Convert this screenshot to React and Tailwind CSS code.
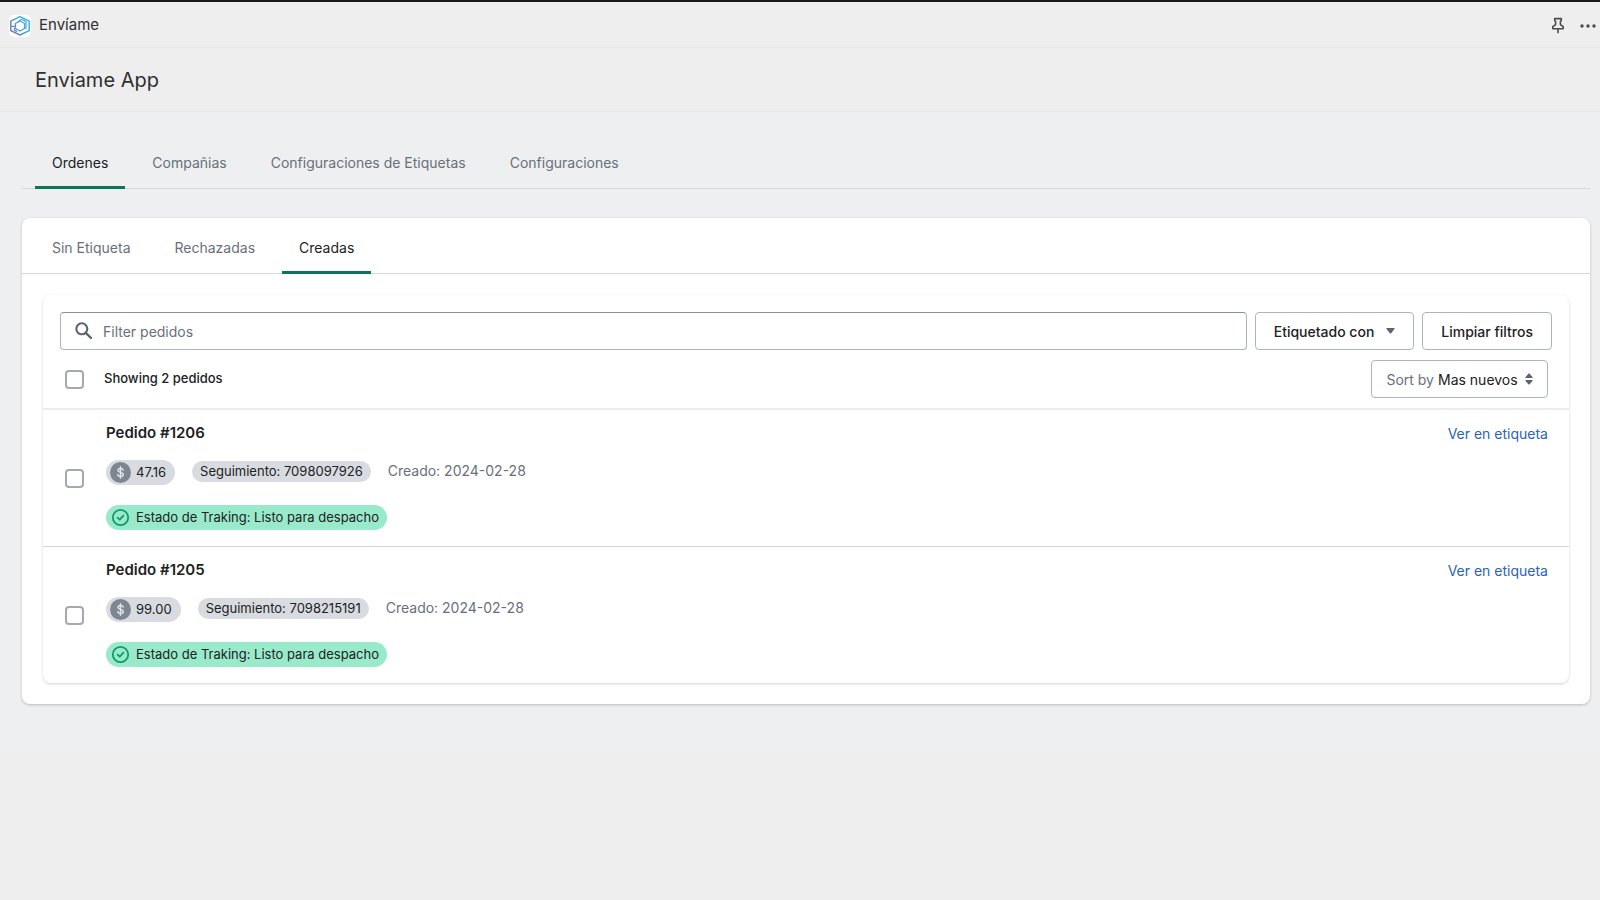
const mainTabs = ["Ordenes", "Compañias", "Configuraciones de Etiquetas", "Configuraciones"];
const orderTabs = ["Sin Etiqueta", "Rechazadas", "Creadas"];
const orders = [
  { id: "1206", total: "47.16", tracking: "7098097926", created: "2024-02-28", status: "Listo para despacho" },
  { id: "1205", total: "99.00", tracking: "7098215191", created: "2024-02-28", status: "Listo para despacho" },
];

function Logo() {
  return (
    <svg viewBox="0 0 22 22" className="size-[22px]" fill="none" aria-hidden="true">
      <defs>
        <linearGradient id="logo" x1="2" y1="18" x2="18" y2="6" gradientUnits="userSpaceOnUse">
          <stop stopColor="#7b6db8" />
          <stop offset="0.45" stopColor="#4e9bd0" />
          <stop offset="1" stopColor="#35b3e6" />
        </linearGradient>
      </defs>
      <rect width="22" height="22" rx="5" fill="#fff" />
      <g stroke="url(#logo)" strokeWidth="1.5" strokeLinejoin="round">
        <path d="M11 1.7 20.2 6.2V15.6L11 20 1.800 15.600V6.200Z" />
        <path d="M11 6 15.600 8.500V13.500L11 16 6.400 13.500V8.500Z" strokeWidth="1.4" />
        <path d="M8.600 7.200 11.600 4.800Q12.600 4.200 13.700 4.800L17 6.600V14M2 11.400H6.200M5.400 13V15.200L8 16.600" strokeWidth="1.200" />
      </g>
    </svg>
  );
}

function PinIcon() {
  return (
    <svg viewBox="0 0 14 18" className="h-[18px] w-[14px]" fill="none" stroke="#4a4a4a" strokeWidth="1.600" strokeLinejoin="round" strokeLinecap="round" aria-hidden="true">
      <path d="M3.700 1.600H10.300V3.500L9.400 4.500V7.600L12.200 9.700V11.800H1.800V9.700L4.600 7.600V4.500L3.700 3.500Z" />
      <path d="M7 12V15.600" />
    </svg>
  );
}

function DotsIcon() {
  return (
    <svg viewBox="0 0 16 4" className="h-1 w-4" fill="#4a4a4a" aria-hidden="true">
      <circle cx="2" cy="2" r="1.7" />
      <circle cx="8" cy="2" r="1.7" />
      <circle cx="14" cy="2" r="1.7" />
    </svg>
  );
}

function SearchIcon() {
  return (
    <svg viewBox="0 0 18 18" className="size-[18px] shrink-0" fill="none" stroke="#5b6470" strokeWidth="2.100" aria-hidden="true">
      <circle cx="6.800" cy="6.800" r="5.500" />
      <path d="M10.800 10.800 16 16" strokeWidth="2.400" strokeLinecap="round" />
    </svg>
  );
}

function Tabs({ items, active, label, className }) {
  return (
    <div role="tablist" aria-label={label} className={`flex gap-[10px] border-b border-[#d5d7da] px-[13px] ${className}`}>
      {items.map((item) => (
        <button
          key={item}
          type="button"
          role="tab"
          aria-selected={item === active}
          className={
            item === active
              ? "-mb-px rounded-t-xs border-b-3 border-[#0b7557] px-[17px] pt-[5px] text-[#202223]"
              : "-mb-px border-b-3 border-transparent px-[17px] pt-[5px] text-[#697079]"
          }
        >
          {item}
        </button>
      ))}
    </div>
  );
}

function Checkbox({ label }) {
  return (
    <input
      type="checkbox"
      aria-label={label}
      className="size-[19px] shrink-0 appearance-none rounded-[4px] border-2 border-[#a3a8b2] bg-white checked:bg-[#0b7557]"
    />
  );
}

function OrderRow({ order }) {
  return (
    <li className="flex items-start border-t border-[#d3d7dd] pr-[21px] pl-[22px] first:border-t-0">
      <div className="flex h-[136px] items-center">
        <Checkbox label={`Seleccionar pedido ${order.id}`} />
      </div>
      <div className="ml-[22px] flex min-w-0 flex-1 flex-col items-start pt-[13px]">
        <h3 className="text-[15px] leading-5 font-semibold">Pedido #{order.id}</h3>
        <div className="mt-[17px] flex items-start">
          <span className="flex h-[25px] items-center gap-[5px] rounded-full bg-[#d8dbe0] pr-[9px] pl-1 text-[13px]">
            <svg viewBox="0 0 21 21" className="size-[21px]" fill="none" aria-hidden="true">
              <circle cx="10.5" cy="10.5" r="10.5" fill="#7f8692" />
              <path d="M13.200 8.100C13 7 12 6.500 10.600 6.500 9.100 6.500 8 7.200 8 8.400 8 11 13.300 9.700 13.300 12.500 13.300 13.700 12.100 14.500 10.600 14.500 9 14.500 7.900 13.900 7.700 12.700M10.500 4.800V16.200" stroke="#dfe2e6" strokeWidth="1.5" strokeLinecap="round" />
            </svg>
            {order.total}
          </span>
          <span className="mt-px ml-[17px] flex h-[21px] items-center rounded-full bg-[#d8dbe0] px-2 text-[13px]">
            Seguimiento: {order.tracking}
          </span>
          <span className="ml-[17px] leading-[21px] text-[#697079]">Creado: {order.created}</span>
        </div>
        <span className="mt-5 flex h-[25px] items-center gap-[5px] rounded-full bg-[#99eacb] pr-2 pl-1 text-[13px]">
          <svg viewBox="0 0 21 21" className="size-[21px]" fill="none" stroke="#109a6c" strokeWidth="1.8" strokeLinecap="round" strokeLinejoin="round" aria-hidden="true">
            <circle cx="10.500" cy="10.500" r="7.700" />
            <path d="M7.600 10.700 9.700 12.700 13.400 8.700" />
          </svg>
          Estado de Traking: {order.status}
        </span>
      </div>
      <a href={`#pedido-${order.id}`} className="mt-[14px] leading-5 text-[#2c62b8]">
        Ver en etiqueta
      </a>
    </li>
  );
}

export default function App() {
  return (
    <div className="min-h-screen bg-[#eeeeee] font-['Inter','Liberation_Sans',sans-serif] text-[14px] text-[#202223]">
      <header className="flex h-12 items-center justify-between border-t-2 border-b border-t-[#1a1a1a] border-b-[#e6e7e8] pt-[2px] pr-1 pl-[9px]">
        <div className="flex items-center gap-2 text-[15px] text-[#303030]">
          <Logo />
          <span>Envíame</span>
        </div>
        <div className="flex items-center gap-[15px]">
          <button type="button" aria-label="Fijar"><PinIcon /></button>
          <button type="button" aria-label="Más acciones" className="flex h-5 items-center"><DotsIcon /></button>
        </div>
      </header>
      <div className="flex h-16 items-center border-b border-[#e6e7e8] px-[35px]">
        <h1 className="text-[20px] text-[#303030]">Enviame App</h1>
      </div>
      <main className="bg-[#edeff1] pt-[22px] pr-[10px] pb-[49px] pl-[22px]">
        <Tabs items={mainTabs} active="Ordenes" label="Secciones" className="h-[55px]" />
        <section className="mt-[29px] rounded-lg bg-white pb-[21px] shadow-[0_1px_3px_rgba(0,0,0,0.22)]">
          <Tabs items={orderTabs} active="Creadas" label="Pedidos" className="h-14" />
          <div className="mx-[21px] mt-[21px] rounded-lg bg-white shadow-[0_1px_3px_rgba(0,0,0,0.18)]">
            <div className="flex gap-2 px-[17px] pt-[17px]">
              <label className="flex h-[38px] min-w-0 flex-1 items-center gap-[10px] rounded-[4px] border border-[#aeb4be] border-t-[#8a919b] px-[14px]">
                <SearchIcon />
                <input type="text" aria-label="Filter pedidos" placeholder="Filter pedidos" className="min-w-0 flex-1 bg-transparent outline-none placeholder:text-[#697079]" />
              </label>
              <button type="button" className="flex h-[38px] items-center gap-3 rounded-[4px] border border-[#aeb4be] px-[18px] font-medium">
                Etiquetado con
                <svg viewBox="0 0 9 6" className="h-1.5 w-[9px]" fill="#5b6470" aria-hidden="true"><path d="M.8 0H8.200Q9 .2 8.500 1L5.100 5.300Q4.500 5.900 3.900 5.300L.5 1Q0 .2.8 0Z" /></svg>
              </button>
              <button type="button" className="h-[38px] rounded-[4px] border border-[#aeb4be] px-[18px] font-medium">Limpiar filtros</button>
            </div>
            <div className="mt-[10px] flex items-center pr-[21px] pb-[10px] pl-[22px]">
              <label className="flex flex-1 items-center gap-5 text-[13px] font-medium">
                <Checkbox label="Seleccionar todos los pedidos" />
                Showing 2 pedidos
              </label>
              <div className="flex h-[38px] items-center rounded-[4px] border border-[#aeb4be] px-[14px]">
                <label htmlFor="sort" className="mr-1 text-[#697079]">Sort by</label>
                <select id="sort" className="appearance-none bg-transparent outline-none">
                  <option>Mas nuevos</option>
                </select>
                <svg viewBox="0 0 8 12" className="ml-[7px] h-3 w-2" fill="#5b6470" aria-hidden="true"><path d="M4 .3Q4.300.3 4.600.7L7.500 4Q7.900 4.900 7.100 5H.9Q.1 4.900.5 4L3.400.7Q3.700.3 4 .3ZM4 11.700Q4.300 11.700 4.600 11.300L7.500 8Q7.900 7.100 7.100 7H.9Q.1 7.100.5 8L3.400 11.300Q3.700 11.700 4 11.700Z" /></svg>
              </div>
            </div>
            <ul className="border-t-2 border-[#ebecee]">
              {orders.map((order) => <OrderRow key={order.id} order={order} />)}
            </ul>
          </div>
        </section>
      </main>
    </div>
  );
}
